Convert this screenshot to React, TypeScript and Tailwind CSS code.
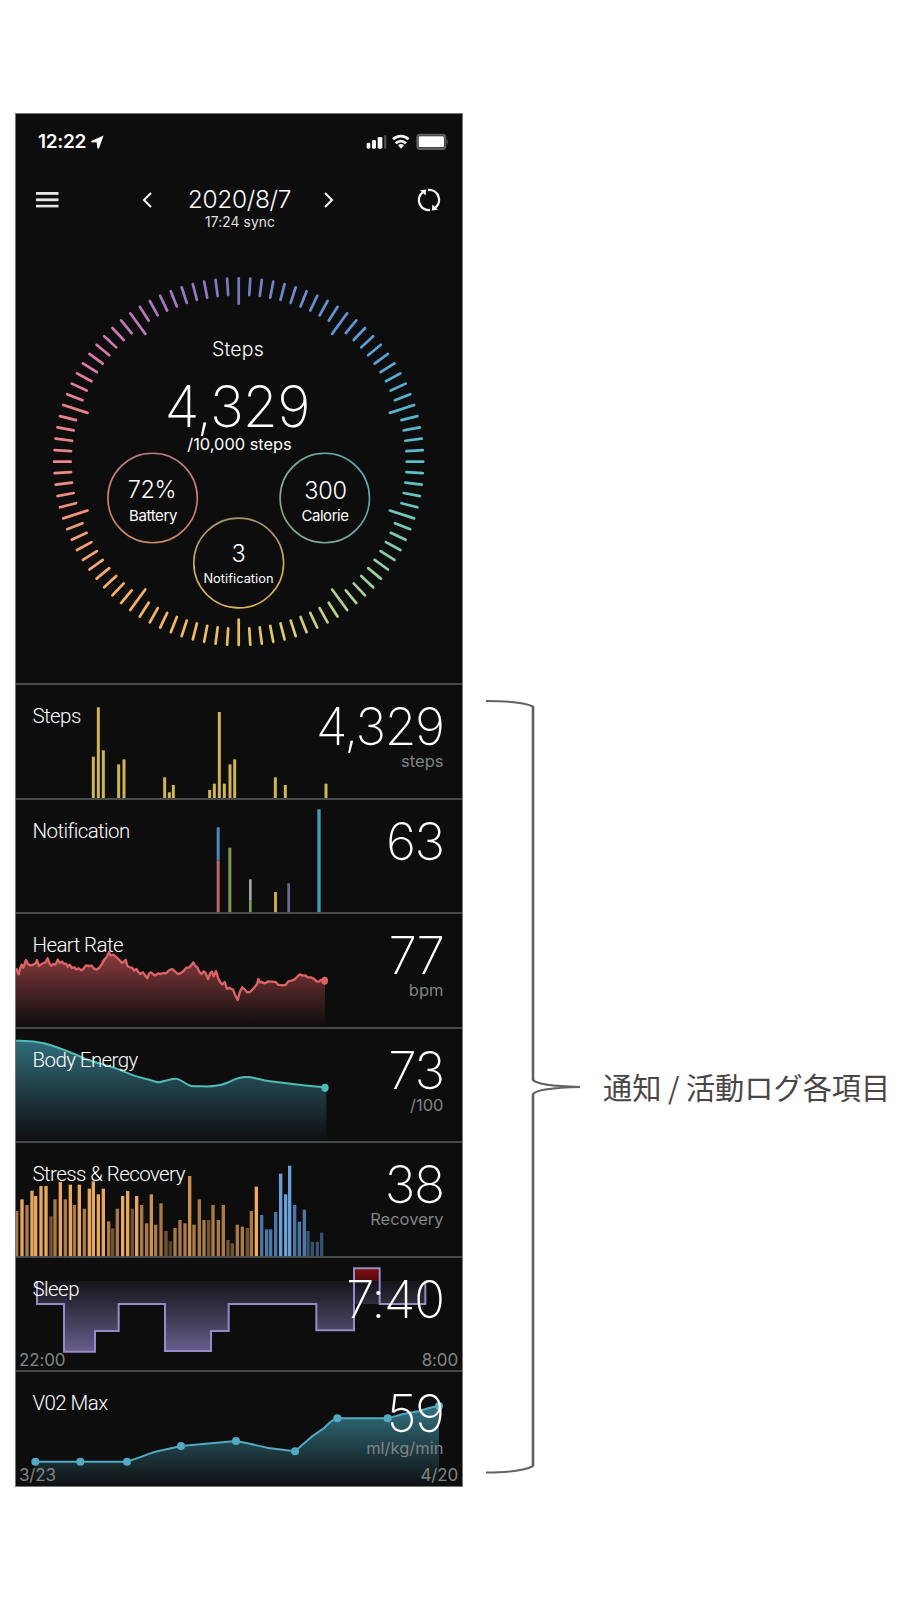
import type { ReactNode } from "react";

type Stop = [number, number, number, number];

const RING_STOPS: Stop[] = [
  [0, 124, 120, 190],
  [20, 112, 138, 206],
  [36, 98, 148, 212],
  [54, 88, 164, 214],
  [72, 86, 180, 206],
  [90, 88, 190, 204],
  [108, 108, 200, 186],
  [126, 144, 206, 168],
  [144, 178, 208, 146],
  [160, 208, 204, 124],
  [180, 232, 192, 98],
  [216, 246, 178, 104],
  [234, 246, 168, 112],
  [252, 240, 148, 122],
  [270, 236, 134, 138],
  [288, 236, 128, 144],
  [306, 218, 122, 172],
  [324, 184, 120, 186],
  [342, 150, 122, 194],
  [360, 124, 120, 190],
];

function ringColor(deg: number) {
  let i = 0;
  while (i < RING_STOPS.length - 2 && RING_STOPS[i + 1][0] <= deg) i++;
  const a = RING_STOPS[i];
  const b = RING_STOPS[i + 1];
  const t = (deg - a[0]) / (b[0] - a[0]);
  const mix = (k: 1 | 2 | 3) => Math.round(a[k] + (b[k] - a[k]) * t);
  return `rgb(${mix(1)},${mix(2)},${mix(3)})`;
}

function Ring() {
  const cx = 222.7;
  const cy = 231.7;
  return (
    <svg className="absolute inset-0" width="447" height="454" viewBox="0 0 447 454" fill="none">
      <defs>
        <linearGradient id="gBattery" x1="0.6" y1="0" x2="0.4" y2="1">
          <stop offset="0" stopColor="#b9787e" />
          <stop offset="0.5" stopColor="#cf7f78" />
          <stop offset="1" stopColor="#c98a62" />
        </linearGradient>
        <linearGradient id="gCalorie" x1="1" y1="0.2" x2="0" y2="0.8">
          <stop offset="0" stopColor="#5aa6b4" />
          <stop offset="0.5" stopColor="#76aaa2" />
          <stop offset="1" stopColor="#8fa98c" />
        </linearGradient>
        <linearGradient id="gNotification" x1="0.5" y1="0" x2="0.5" y2="1">
          <stop offset="0" stopColor="#a8926e" />
          <stop offset="0.5" stopColor="#c9ab62" />
          <stop offset="1" stopColor="#dcb558" />
        </linearGradient>
      </defs>
      {Array.from({ length: 100 }, (_, i) => {
        const a = (i * 3.6 * Math.PI) / 180;
        const outer = 183.4;
        const inner = i % 10 === 0 ? 158 : 167;
        return (
          <line
            key={i}
            x1={cx + Math.sin(a) * outer * 1.006}
            y1={cy - Math.cos(a) * outer}
            x2={cx + Math.sin(a) * inner * 1.006}
            y2={cy - Math.cos(a) * inner}
            stroke={ringColor(i * 3.6)}
            strokeWidth="2.7"
            strokeLinecap="round"
          />
        );
      })}
      <circle cx="136.6" cy="268" r="44.7" stroke="url(#gBattery)" strokeWidth="1.6" />
      <circle cx="308.8" cy="268" r="44.7" stroke="url(#gCalorie)" strokeWidth="1.6" />
      <circle cx="222.7" cy="333" r="44.9" stroke="url(#gNotification)" strokeWidth="1.6" />
    </svg>
  );
}

function StatusIcons() {
  return (
    <svg width="84" height="18" viewBox="1096 97 252 54">
      <g fill="#f4f4f4">
        <rect x="1098" y="126" width="11" height="18" rx="4" />
        <rect x="1114" y="118" width="12" height="26" rx="4" />
        <rect x="1131" y="109" width="14" height="35" rx="4" />
        <rect x="1150" y="103" width="7" height="41" rx="3" fill="#4a4a4a" />
        <path d="M1201 144l-9-10a13 13 0 0 1 18 0z" />
      </g>
      <g fill="none" stroke="#f4f4f4" strokeWidth="8">
        <path d="M1177 116a34 34 0 0 1 47 0" />
        <path d="M1185 128a22 22 0 0 1 31 0" />
      </g>
      <rect x="1250" y="102" width="84" height="43" rx="8" fill="none" stroke="#606060" strokeWidth="6" />
      <rect x="1254" y="107" width="76" height="33" rx="4" fill="#fff" />
      <path d="M1339 115q5 8 0 17z" fill="#606060" />
    </svg>
  );
}

function Header() {
  return (
    <>
      <div className="flex h-[55px] items-center justify-between pr-[12px] pl-[22px]">
        <div className="flex items-center gap-[5px]">
          <span className="text-[19px] leading-none font-semibold tracking-[-0.3px] text-white">12:22</span>
          <svg width="13" height="14" viewBox="0 0 13 14" fill="#fff">
            <path d="M12.6.4L.2 6.1l.3 1.500 5.100-.4.9 6.300 1.500.1z" />
          </svg>
        </div>
        <StatusIcons />
      </div>
      <div className="mt-[17px] flex h-[27px] items-center justify-between pr-[21px] pl-[20px]">
        <svg width="23" height="16" viewBox="0 0 23 16" fill="#e6e6e6">
          <rect x="0" y="0" width="22.5" height="2.8" />
          <rect x="0" y="6.4" width="22.5" height="2.8" />
          <rect x="0" y="12.8" width="22.5" height="2.6" />
        </svg>
        <div className="flex items-center">
          <svg width="10" height="16" viewBox="0 0 10 16" fill="none" stroke="#f2f2f2" strokeWidth="2.1">
            <path d="M9 1L2 8l7 7" />
          </svg>
          <span className="w-[172px] pl-[3px] text-center text-[24.5px] leading-[27px] font-light tracking-[-0.35px] whitespace-nowrap text-white">
            2020/8/7
          </span>
          <svg width="10" height="16" viewBox="0 0 10 16" fill="none" stroke="#f2f2f2" strokeWidth="2.1">
            <path d="M1 1l7 7-7 7" />
          </svg>
        </div>
        <svg width="24" height="24" viewBox="0 0 24 24" fill="none" stroke="#f2f2f2" strokeWidth="2.4">
          <path d="M11 2A10 10 0 0 1 18.5 19.6" />
          <path d="M13 22A10 10 0 0 1 5.5 4.4" />
          <path d="M3 2.2l6.2-.6-.6 6z" fill="#f2f2f2" stroke="none" />
          <path d="M21 21.800l-6.200.6.6-6z" fill="#f2f2f2" stroke="none" />
        </svg>
      </div>
      <div className="h-[17px] pl-[2px] text-center text-[13.8px] leading-[18px] tracking-[0.1px] text-[#e0e0e0]">17:24 sync</div>
    </>
  );
}

function Dial() {
  return (
    <section className="relative h-[454px] text-center text-white">
      <Ring />
      <div className="relative pt-[104px] pr-[2px]">
        <div className="h-[30px] text-[19.5px] leading-[30px] font-light tracking-[0.2px]">Steps</div>
        <div className="mt-[13px] h-[61px] pr-[2px] text-[57px] leading-[60px] font-extralight tracking-[-0.9px]">4,329</div>
        <div className="h-[14px] pl-[3px] text-[16.4px] leading-[13px]">/10,000 steps</div>
      </div>
      <div className="absolute top-[223px] left-[91px] w-[90px] pt-[24px]">
        <div className="text-[23.5px] leading-[26px] font-light tracking-[-0.3px]">72%</div>
        <div className="pl-[2px] text-[15px] leading-[25px] tracking-[-0.35px]">Battery</div>
      </div>
      <div className="absolute top-[223px] left-[264px] w-[90px] pt-[25px]">
        <div className="pl-[1px] text-[23.5px] leading-[26px] font-light tracking-[-0.3px]">300</div>
        <div className="text-[15px] leading-[24px] tracking-[-0.45px]">Calorie</div>
      </div>
      <div className="absolute top-[288px] left-[177px] w-[90px] pt-[23px]">
        <div className="pl-[1px] text-[23.5px] leading-[26px] font-light">3</div>
        <div className="pl-[1px] text-[12.8px] leading-[24px] tracking-[0.05px]">Notification</div>
      </div>
    </section>
  );
}

type RowProps = {
  label: string;
  value: string;
  unit?: string;
  from?: string;
  to?: string;
  top: number;
  children: ReactNode;
};

function Row({ label, value, unit, from, to, top, children }: RowProps) {
  return (
    <section className="relative h-[114.5px] text-white">
      <svg className="absolute inset-0 overflow-visible" width="447" height="114.5" viewBox={`18 ${top} 1341 343.5`} fill="none">
        {children}
        <path d={`M18 ${top}H1359`} stroke="#5b5f61" strokeWidth="5" />
      </svg>
      <div className="relative flex justify-between pr-[18.5px] pl-[16.5px]">
        <span className="pt-[20px] font-[Roboto] text-[20.5px] leading-[25px] font-light tracking-[-0.58px]">{label}</span>
        <div className="flex flex-col items-end pt-[17px]">
          <span className="text-[51.5px] leading-[50px] font-extralight tracking-[-1.5px]">{value}</span>
          {unit && <span className="text-[16.5px] leading-[21px] text-[#808485]">{unit}</span>}
        </div>
      </div>
      {from && (
        <div className="absolute right-[4px] bottom-[3px] left-[3px] flex justify-between text-[17px] leading-[16px] tracking-[-0.15px] text-[#808485]">
          <span>{from}</span>
          <span>{to}</span>
        </div>
      )}
    </section>
  );
}

const STEP_BARS = [
  [250, 246], [265, 98], [280, 227], [326, 269], [342, 254], [464, 308], [478, 353], [490, 331],
  [599, 346], [613, 327], [628, 112], [643, 327], [660, 269], [674, 254], [796, 308], [826, 331], [948, 327],
];

const O1 = "#e8a75e";
const O2 = "#a97a45";
const O3 = "#705433";
const B1 = "#6b9fd9";
const B2 = "#4c77a4";
const B3 = "#36506d";
const STRESS_BARS: [number, number, string][] = [
  [20, 227, O2], [36, 192, O1], [51, 209, O2], [66, 166, O1], [77, 182, O1], [93, 152, O1], [108, 152, O1],
  [123, 243, O3], [135, 192, O2], [151, 140, O1], [166, 192, O2], [181, 148, O1], [193, 209, O2], [208, 148, O1],
  [223, 220, O2], [238, 160, O1], [250, 138, O1], [265, 177, O1], [280, 160, O1], [296, 258, O2], [308, 279, O3],
  [322, 220, O2], [338, 182, O1], [353, 167, O1], [367, 220, O3], [380, 182, O1], [395, 209, O2], [410, 264, O2],
  [424, 177, "#cb9151"], [437, 268, O2], [453, 204, O2], [468, 287, O3], [481, 318, "#55422b"], [495, 278, O2],
  [510, 254, O2], [525, 264, O2], [539, 122, "#c98f50"], [552, 268, O2], [568, 192, O2], [582, 254, O2],
  [596, 254, O3], [609, 209, O2], [625, 254, O2], [640, 209, O2], [654, 314, O3], [667, 324, O3], [682, 268, O2],
  [697, 274, O2], [712, 278, O3], [724, 227, O2], [739, 154, "#f0ab5c"], [755, 239, B2], [770, 282, B2],
  [782, 282, B2], [797, 230, B2], [812, 115, B1], [827, 177, B1], [839, 91, B1], [854, 209, B2], [868, 259, B2],
  [883, 223, B2], [894, 287, B3], [907, 319, B3], [922, 319, B3], [935, 292, B3],
];

const HEART =
  "M16 190L20 193L26 208L30 192L35 179L40 188L48 165L54 177L60 181L68 180L77 175L81 165L87 183L94 178L101 174L106 173L113 160L119 177L124 182L130 177L137 179L143 164L149 174L156 170L163 177L168 176L173 185L179 179L186 189L193 187L198 193L206 190L214 196L220 192L228 181L237 183L245 182L252 191L260 194L267 189L275 178L283 163L289 158L297 142L302 151L310 149L320 157L328 165L336 174L341 171L347 164L352 183L359 187L366 188L373 197L379 192L386 203L391 207L399 202L405 211L412 220L417 206L423 202L430 208L436 211L444 205L452 207L460 204L468 205L477 196L486 192L494 198L503 207L511 205L520 199L528 189L537 187L543 182L550 172L555 182L562 187L568 201L575 207L581 199L587 204L594 222L601 204L606 200L611 214L618 198L624 218L630 231L637 238L644 231L651 252L658 248L664 252L669 254L675 269L683 285L690 260L697 247L705 254L711 262L720 261L729 252L736 244L741 237L745 222L750 232L756 231L762 235L769 233L775 229L785 230L797 231L804 239L815 241L827 240L835 229L845 227L854 223L861 216L869 208L878 212L886 211L893 217L902 217L911 221L920 229L927 230L932 225L945 227";

const ENERGY =
  "M16 406C60 408 90 408 130 422S190 444 220 458S300 480 340 498S390 516 420 524S440 534 470 525S505 520 525 533S550 542 580 543S630 541 650 533S680 515 708 515S750 525 780 528S870 540 945 546";

const VO2 = "M76 635H211H351L395 620Q430 605 460 600L513 588L678 573Q730 583 775 594L855 604L905 560L940 536L962 515L982 505H1133Q1180 490 1225 484Q1260 472 1287 468";

const VO2_POINTS = [
  [76, 635], [211, 635], [351, 635], [513, 588], [678, 573], [855, 604], [982, 505], [1133, 505], [1287, 468],
];

const SLEEP = "M81 92V161H162V304H255V242H326V161H465V302H603V242H656V161H919V240H1032V54H1109V161H1246V92";

function Gradient({ id, color, y1, y2, from, to }: { id: string; color: string; y1: number; y2: number; from: number; to: number }) {
  return (
    <linearGradient id={id} gradientUnits="userSpaceOnUse" x1="0" y1={y1} x2="0" y2={y2}>
      <stop offset="0" stopColor={color} stopOpacity={from} />
      <stop offset="1" stopColor={color} stopOpacity={to} />
    </linearGradient>
  );
}

function Metrics() {
  return (
    <>
      <Row label="Steps" value="4,329" unit="steps" top={28}>
        {STEP_BARS.map(([x, y]) => (
          <rect key={x} x={x - 4.5} y={y} width="9" height={370 - y} fill="#cfb455" />
        ))}
      </Row>
      <Row label="Notification" value="63" top={372}>
        <rect x="620" y="457" width="9" height="100" fill="#4f86c0" />
        <rect x="620" y="557" width="9" height="155" fill="#bd666c" />
        <rect x="655" y="518" width="9" height="194" fill="#7d9a5c" />
        <rect x="717" y="613" width="8" height="62" fill="#a5a5a5" />
        <rect x="717" y="675" width="8" height="37" fill="#7d9a5c" />
        <rect x="792" y="651" width="9" height="61" fill="#c8a94e" />
        <rect x="832" y="625" width="8" height="87" fill="#716796" />
        <rect x="922" y="403" width="10" height="309" fill="#479bb0" />
      </Row>
      <Row label="Heart Rate" value="77" unit="bpm" top={24}>
        <defs>
          <Gradient id="gHeart" color="#e45b60" y1={140} y2={360} from={0.6} to={0.01} />
        </defs>
        <path d={`${HEART}V362H16Z`} fill="url(#gHeart)" />
        <path d={HEART} stroke="#dd6367" strokeWidth="7" strokeLinejoin="round" />
        <ellipse cx="944" cy="227" rx="10" ry="12" fill="#dd6367" />
      </Row>
      <Row label="Body Energy" value="73" unit="/100" top={368}>
        <defs>
          <Gradient id="gEnergy" color="#4093a8" y1={400} y2={705} from={0.72} to={0.01} />
        </defs>
        <path d={`${ENERGY}H949V706H16Z`} fill="url(#gEnergy)" />
        <path d={ENERGY} stroke="#4dbdb5" strokeWidth="6" />
        <ellipse cx="945" cy="547" rx="11" ry="12" fill="#4dbdb5" />
      </Row>
      <Row label="Stress & Recovery" value="38" unit="Recovery" top={20}>
        {STRESS_BARS.map(([x, y, c]) => (
          <rect key={x} x={x - 5} y={y} width="10" height={363 - y} fill={c} />
        ))}
      </Row>
      <Row label="Sleep" value="7:40" from="22:00" to="8:00" top={20}>
        <defs>
          <Gradient id="gSleep" color="#7b70a8" y1={90} y2={304} from={0.06} to={0.82} />
          <Gradient id="gAwake" color="#8d0c10" y1={54} y2={92} from={0.9} to={0.55} />
        </defs>
        <path d="M81 92V161H162V304H255V242H326V161H465V302H603V242H656V161H919V240H1032V161H1246V92Z" fill="url(#gSleep)" />
        <rect x="1032" y="54" width="77" height="38" fill="url(#gAwake)" />
        <path d={SLEEP} stroke="#958bc6" strokeWidth="6" />
      </Row>
      <Row label="V02 Max" value="59" unit="ml/kg/min" from="3/23" to="4/20" top={363}>
        <defs>
          <Gradient id="gVo2" color="#439cb0" y1={460} y2={705} from={0.72} to={0.03} />
        </defs>
        <path d={`${VO2}V706H76Z`} fill="url(#gVo2)" />
        <path d={VO2} stroke="#52a9c3" strokeWidth="6" strokeLinejoin="round" />
        {VO2_POINTS.map(([x, y]) => (
          <circle key={x} cx={x} cy={y} r="12" fill="#52a9c3" />
        ))}
      </Row>
    </>
  );
}

function Brace() {
  return (
    <svg className="mt-[586px] ml-[22px]" width="96" height="776" viewBox="0 0 96 776" fill="none" stroke="#636161" strokeWidth="2">
      <path d="M1 2Q36 2 48 7.5M48 381Q53 387 95 388Q53 389 48 395M48 767Q36 773.5 1 773.5" />
      <path d="M48 7V381.5M48 394.5V767.5" strokeWidth="2.6" />
    </svg>
  );
}

export default function App() {
  return (
    <main className="flex h-[1600px] w-[900px] items-start overflow-hidden bg-white pt-[113px] pl-[15px] font-[Inter,'Noto_Sans_CJK_JP',sans-serif]">
      <div className="h-[1374px] w-[448px] shrink-0 overflow-hidden border border-[#777] bg-[#0d0d0d]">
        <Header />
        <Dial />
        <Metrics />
      </div>
      <Brace />
      <p className="mt-[952px] ml-[22px] font-['Noto_Sans_CJK_JP',sans-serif] text-[29.2px] leading-[42px] whitespace-nowrap text-[#4a4646]">
        通知 / 活動ログ各項目
      </p>
    </main>
  );
}
